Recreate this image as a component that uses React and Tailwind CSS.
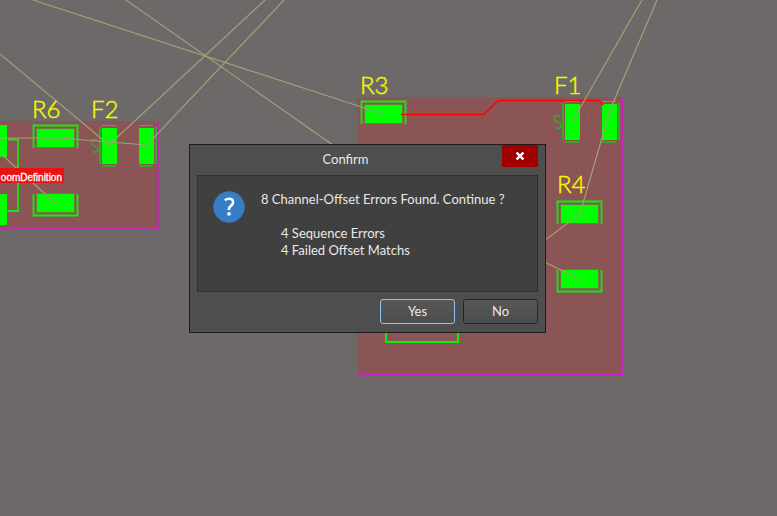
import clsx from "clsx";

const ratLines = [
  "0,54 109,145 265,0",
  "33,0 383,114",
  "126,0 340,150",
  "284,0 147,145 109,142 60,138 0,138",
  "0,153 55,203",
  "642,0 572,122",
  "657,0 610,110 580,214 540,244",
  "540,260 580,279",
];

const designators = [
  { name: "R6", x: 32, y: 118 },
  { name: "F2", x: 91, y: 118 },
  { name: "R3", x: 360, y: 94 },
  { name: "F1", x: 554, y: 94 },
  { name: "R4", x: 557, y: 193 },
];

// Horizontal pad with its three sided silkscreen outline
const ResistorPad = ({ x, y, flip }) => (
  <g>
    <rect x={x} y={y} width="37" height="18" fill="#00ff00" />
    <rect x={x - 0.5} y={y - 0.5} width="38" height="19" fill="none" stroke="#5b9638" strokeOpacity="0.5" />
    <path
      d={
        flip
          ? `M${x - 3.5} ${y}V${y + 21.5}H${x + 40.5}V${y}`
          : `M${x - 3.5} ${y + 19}V${y - 3.5}H${x + 40.5}V${y + 19}`
      }
      fill="none"
      stroke="#0cf008"
      strokeWidth="1.8"
    />
  </g>
);

const FusePad = ({ x, y, side }) => {
  const lineX = side === "left" ? x - 2 : x + 17;
  return (
    <g>
      <rect x={x} y={y} width="15" height="36" fill="#00ff00" />
      <g fill="none" stroke="#35a82c">
        <path d={`M${x} ${y - 2.5}h14`} stroke="#12d80c" />
        <path d={`M${x} ${y + 38}h14`} strokeWidth="2" />
        <path d={`M${lineX} ${y - 1}v37`} strokeWidth="2" />
      </g>
    </g>
  );
};

const Board = () => (
  <svg className="absolute inset-0 h-full w-full" aria-label="PCB layout">
    <rect x="-5.5" y="121.5" width="164" height="107" fill="#8b5555" stroke="#b82aae" />
    <rect x="357.5" y="97.5" width="265" height="277" fill="#8b5555" stroke="#d21cc6" />

    {/* Left room */}
    <rect x="-8" y="125" width="15" height="32" fill="#00ff00" />
    <rect x="-8" y="194" width="15" height="31" fill="#00ff00" />
    <path d="M8 139.5H18V211H8" fill="none" stroke="#12e80c" strokeWidth="1.8" />
    <ResistorPad x={37} y={129} />
    <ResistorPad x={37} y={194} flip />
    <FusePad x={102} y={128} side="left" />
    <FusePad x={139} y={128} side="right" />
    <path
      d="M97.500 141c-1-2.500-6-2.500-6 1s1.500 3 3.500 4 3 2 3 4-3 3.500-5 1"
      fill="none"
      stroke="#22c01c"
      strokeWidth="1.2"
    />
    <path d="M124.500 141v3" stroke="#35a82c" />

    {/* Right room */}
    <ResistorPad x={365} y={105} />
    <ResistorPad x={561} y={205} />
    <ResistorPad x={561} y={270} flip />
    <FusePad x={565} y={104} side="left" />
    <FusePad x={602} y={104} side="right" />
    <path
      d="M560 117c-1-3-5.500-2.500-5.500 1s1.500 3 3.500 4 3 2 3 4-2.500 4-4.500 1"
      fill="none"
      stroke="#22c01c"
      strokeWidth="1.2"
    />
    <path d="M587.500 117v2" stroke="#35a82c" />
    <path d="M386 325V342H458V325" fill="none" stroke="#0cf008" strokeWidth="2" />
    <path
      d="M401 114.500H484L498 100.500H599L603 105"
      fill="none"
      stroke="#ff0000"
      strokeWidth="1.6"
    />

    {ratLines.map((points) => (
      <polyline key={points} points={points} fill="none" stroke="#a3a077" strokeWidth="1.2" />
    ))}

    {designators.map(({ name, x, y }) => (
      <text
        key={name}
        x={x}
        y={y}
        className="fill-[#f4f400] stroke-[#f4f400] stroke-[0.5px] font-['Lato'] text-[24px] font-light"
      >
        {name}
      </text>
    ))}

    <rect x="0" y="168" width="64" height="15" fill="#e81313" />
    <text
      x="62"
      y="181"
      textAnchor="end"
      className="fill-white stroke-white stroke-[0.3px] font-['Liberation_Sans'] text-[10px]"
    >
      oomDefinition
    </text>
  </svg>
);

const DialogButton = ({ children, focused }) => (
  <button
    type="button"
    className={clsx(
      "h-[25px] w-[75px] rounded-[3px] border bg-linear-to-b from-[#575757] to-[#4d4d4d]",
      focused ? "border-[#8fc2f2]" : "border-[#252525]"
    )}
  >
    {children}
  </button>
);

const ConfirmDialog = () => (
  <div
    role="dialog"
    aria-labelledby="confirm-title"
    className="absolute top-36 left-[189px] w-[357px] border border-[#1c1c1c] bg-[#4e4e4e] px-[7px] pb-2 font-['Lato',sans-serif] text-[13px] leading-[17px] text-[#e8e8e8]"
  >
    <header className="flex h-[30px] items-start">
      <h1 id="confirm-title" className="flex-1 pt-1.5 pr-2 text-center">
        Confirm
      </h1>
      <button
        type="button"
        aria-label="Close"
        className="flex h-[22px] w-9 items-center justify-center bg-[#a00000]"
      >
        <svg width="8" height="8" viewBox="0 0 8 8" stroke="#fff" strokeWidth="2.4">
          <path d="M0.500 0.500L7.500 7.500M7.500 0.500L0.500 7.500" />
        </svg>
      </button>
    </header>

    <div className="flex h-[117px] gap-4 border border-[#303030] bg-[#404040] px-[15px] pt-[15px]">
      <svg className="h-8 w-8 shrink-0" viewBox="0 0 32 32">
        <circle cx="16" cy="16" r="15.700" fill="#367cc6" />
        <path
          d="M11.800 9.200c1.300-.9 2.700-1.400 4.200-1.400 2.600 0 4.100 1.300 4.100 3.400 0 3.400-4.200 3.500-4.200 6.900v.8"
          fill="none"
          stroke="#fff"
          strokeWidth="2.600"
        />
        <circle cx="16" cy="22.800" r="1.900" fill="#fff" />
      </svg>
      <div className="whitespace-nowrap">
        <p className="mb-[17px]">8 Channel-Offset Errors Found. Continue ?</p>
        <p className="pl-5">4 Sequence Errors</p>
        <p className="pl-5">4 Failed Offset Matchs</p>
      </div>
    </div>

    <footer className="mt-[7px] flex justify-end gap-2">
      <DialogButton focused>Yes</DialogButton>
      <DialogButton>No</DialogButton>
    </footer>
  </div>
);

function App() {
  return (
    <main className="relative min-h-screen overflow-hidden bg-[#6d6968]">
      <Board />
      <ConfirmDialog />
    </main>
  );
}

export default App;
